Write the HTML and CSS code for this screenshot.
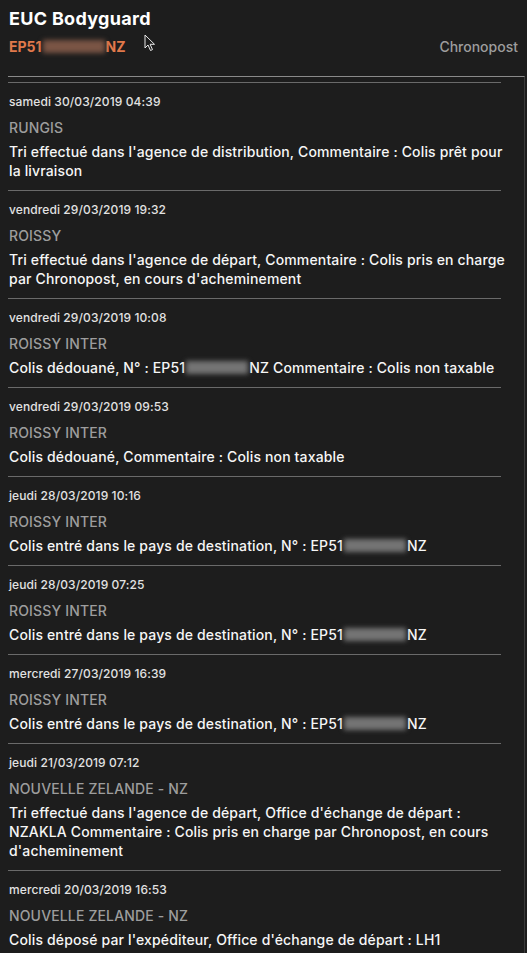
FILE: index.html
```html
<!DOCTYPE html>
<html lang="fr">
<head>
<meta charset="utf-8">
<title>EUC Bodyguard</title>
<link rel="stylesheet" href="styles.css">
</head>
<body>
<div class="app">
  <header class="header">
    <h1 class="title">EUC Bodyguard</h1>
    <div class="meta">
      <span class="tracking">EP51<span class="blur blur-orange"></span>NZ</span>
      <span class="carrier">Chronopost</span>
    </div>
    <svg class="cursor" width="12" height="18" viewBox="0 0 12 18"><path d="M1 1 L1 14 L4 11 L6.5 16.5 L8.5 15.6 L6.1 10.3 L10.5 10.3 Z" fill="#1d1d1d" stroke="#e8e8e8" stroke-width="1" stroke-linejoin="round"/></svg>
  </header>
  <main class="list">
    <article class="event">
      <div class="date">samedi 30/03/2019 04:39</div>
      <div class="place">RUNGIS</div>
      <p class="desc">Tri effectué dans l'agence de distribution, Commentaire : Colis prêt pour la livraison</p>
    </article>
    <article class="event">
      <div class="date">vendredi 29/03/2019 19:32</div>
      <div class="place">ROISSY</div>
      <p class="desc">Tri effectué dans l'agence de départ, Commentaire : Colis pris en charge par Chronopost, en cours d'acheminement</p>
    </article>
    <article class="event">
      <div class="date">vendredi 29/03/2019 10:08</div>
      <div class="place">ROISSY INTER</div>
      <p class="desc">Colis dédouané, N° : EP51<span class="blur"></span>NZ Commentaire : Colis non taxable</p>
    </article>
    <article class="event">
      <div class="date">vendredi 29/03/2019 09:53</div>
      <div class="place">ROISSY INTER</div>
      <p class="desc">Colis dédouané, Commentaire : Colis non taxable</p>
    </article>
    <article class="event">
      <div class="date">jeudi 28/03/2019 10:16</div>
      <div class="place">ROISSY INTER</div>
      <p class="desc">Colis entré dans le pays de destination, N° : EP51<span class="blur"></span>NZ</p>
    </article>
    <article class="event">
      <div class="date">jeudi 28/03/2019 07:25</div>
      <div class="place">ROISSY INTER</div>
      <p class="desc">Colis entré dans le pays de destination, N° : EP51<span class="blur"></span>NZ</p>
    </article>
    <article class="event">
      <div class="date">mercredi 27/03/2019 16:39</div>
      <div class="place">ROISSY INTER</div>
      <p class="desc">Colis entré dans le pays de destination, N° : EP51<span class="blur"></span>NZ</p>
    </article>
    <article class="event">
      <div class="date">jeudi 21/03/2019 07:12</div>
      <div class="place">NOUVELLE ZELANDE - NZ</div>
      <p class="desc">Tri effectué dans l'agence de départ, Office d'échange de départ : NZAKLA Commentaire : Colis pris en charge par Chronopost, en cours d'acheminement</p>
    </article>
    <article class="event">
      <div class="date">mercredi 20/03/2019 16:53</div>
      <div class="place">NOUVELLE ZELANDE - NZ</div>
      <p class="desc">Colis déposé par l'expéditeur, Office d'échange de départ : LH1</p>
    </article>
  </main>
</div>
</body>
</html>
```
FILE: styles.css
```css
* { box-sizing: border-box; }
html, body {
  margin: 0;
  padding: 0;
  background: #1d1d1d;
  height: 100%;
  overflow: hidden;
}
body {
  font-family: Inter, "Helvetica Neue", Arial, sans-serif;
  color: #f2f2f2;
}
.app {
  display: flex;
  flex-direction: column;
  height: 100%;
}
.header {
  position: relative;
  padding: 8px 9px 0 9px;
}
.title {
  margin: 0;
  font-size: 18px;
  line-height: 22px;
  font-weight: 700;
  letter-spacing: 0.3px;
  color: #ffffff;
}
.meta {
  display: flex;
  justify-content: space-between;
  align-items: center;
  margin-top: 7px;
  height: 18px;
}
.tracking {
  font-size: 14px;
  font-weight: 700;
  color: #e0794b;
  display: flex;
  align-items: center;
}
.carrier {
  font-size: 14px;
  font-weight: 500;
  color: #9d9d9d;
}
.blur {
  display: inline-block;
  width: 62px;
  height: 13px;
  background: #747474;
  filter: blur(2.5px);
  vertical-align: -1px;
  margin: 0 1px;
}
.blur-orange {
  background: #7a5545;
  width: 62px;
}
.cursor {
  position: absolute;
  left: 144px;
  top: 34px;
}
.list {
  flex: 1;
  margin-top: 21px;
  margin-left: 8px;
  margin-right: 2px;
  border-top: 1px solid #8a8a8a;
  border-right: 1px solid #3a3a3a;
  padding-top: 5px;
  padding-right: 16px;
  overflow: hidden;
}
.event {
  background: linear-gradient(#6a6a6a, #6a6a6a) no-repeat left top / calc(100% - 7px) 1px;
  padding: 12px 0 10px 1px;
}
.date {
  font-size: 12px;
  line-height: 16px;
  font-weight: 500;
  letter-spacing: 0.1px;
  color: #e2e2e2;
}
.place {
  margin-top: 9px;
  font-size: 14px;
  line-height: 18px;
  font-weight: 500;
  letter-spacing: 0.15px;
  color: #9d9d9d;
}
.desc {
  margin: 5px 0 0 0;
  font-size: 14px;
  line-height: 19px;
  font-weight: 500;
  letter-spacing: 0.15px;
  color: #f6f6f6;
}
```
